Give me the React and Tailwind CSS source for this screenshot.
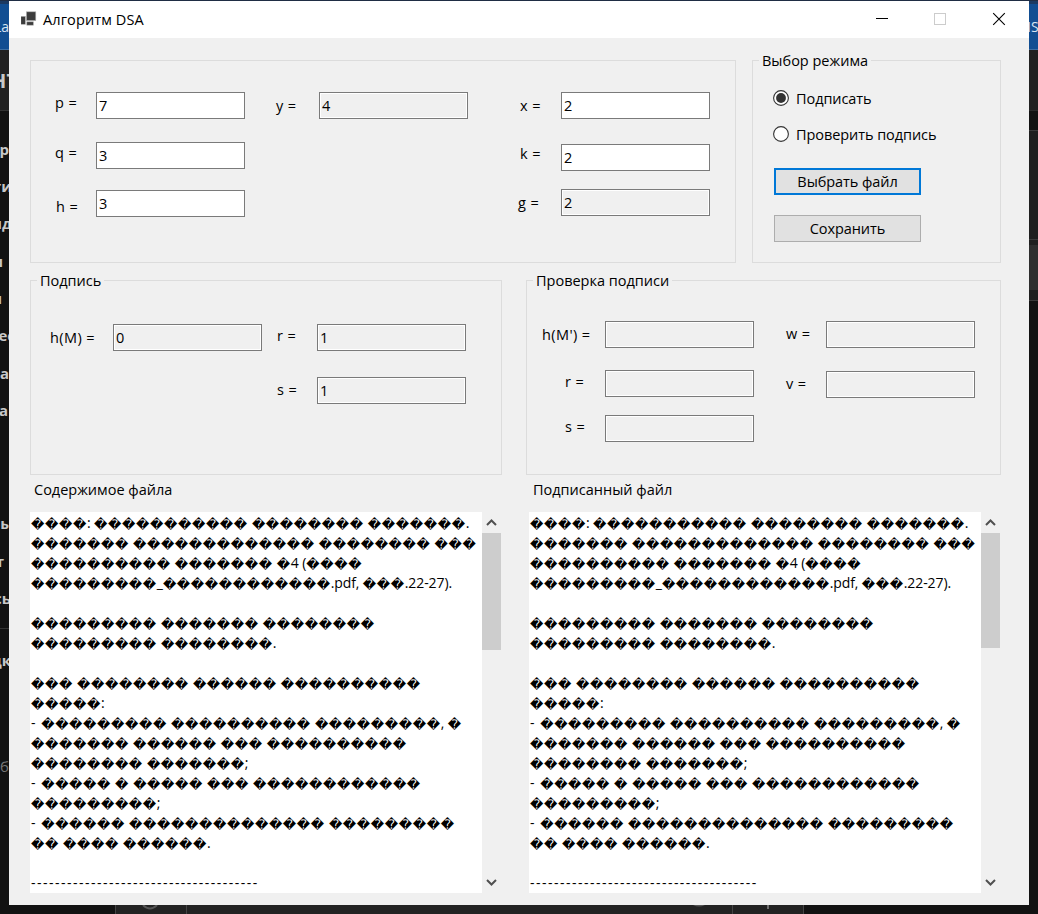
const TEXT = 'text-[14.5px] leading-5';

function Label({ children, className = '' }) {
  return <span className={`block shrink-0 whitespace-pre tracking-[0.4px] ${TEXT} ${className}`}>{children}</span>;
}

function Field({ label, value = '', readOnly, labelClass, className = '' }) {
  return (
    <div className={`flex ${className}`}>
      <Label className={labelClass}>{label}</Label>
      <div className={`h-[27px] w-[149px] shrink-0 border border-[#7a7a7a] ${readOnly ? 'bg-[#f0f0f0] shadow-[inset_0_0_0_1px_#fff]' : 'bg-white'}`}>
        <span className={`block pt-[3px] pl-[2px] ${TEXT}`}>{value}</span>
      </div>
    </div>
  );
}

function Group({ title, className = '', children }) {
  return (
    <section className={`relative shrink-0 border border-[#dcdcdc] ${className}`}>
      {title && (
        <h2 className={`absolute -top-[10px] left-[6px] whitespace-nowrap bg-[#f0f0f0] px-[3px] ${TEXT}`}>{title}</h2>
      )}
      {children}
    </section>
  );
}

function Radio({ checked, children, className = '' }) {
  return (
    <div className={`flex h-5 items-center ${className}`}>
      <svg width="16" height="16" viewBox="0 0 16 16">
        <circle cx="8" cy="8" r="7.4" fill="#fff" stroke="#333" strokeWidth="1.1" />
        {checked && <circle cx="8" cy="8" r="4.9" fill="#333" />}
      </svg>
      <span className={`pt-[2px] pl-[7px] tracking-[-0.07px] ${TEXT}`}>{children}</span>
    </div>
  );
}

function Button({ focused, children, className = '' }) {
  return (
    <button
      type="button"
      className={`flex h-[27px] w-[147px] items-center justify-center bg-[#e1e1e1] tracking-[-0.07px] ${TEXT} ${focused ? 'border-2 border-[#0078d7]' : 'border border-[#adadad]'} ${className}`}
    >
      {children}
    </button>
  );
}

const R = (n) => '\uFFFD'.repeat(n);
const LINES = [
  `${R(4)}: ${R(11)} ${R(8)} ${R(7)}.`,
  `${R(7)} ${R(13)} ${R(8)} ${R(3)}`,
  `${R(10)} ${R(7)} ${R(1)}4 (${R(4)}`,
  `${R(9)}_${R(12)}.pdf, ${R(3)}.22-27).`,
  '',
  `${R(9)} ${R(7)} ${R(8)}`,
  `${R(9)} ${R(8)}.`,
  '',
  `${R(3)} ${R(8)} ${R(6)} ${R(10)}`,
  `${R(5)}:`,
  `- ${R(9)} ${R(10)} ${R(9)}, ${R(1)}`,
  `${R(7)} ${R(6)} ${R(3)} ${R(10)}`,
  `${R(8)} ${R(7)};`,
  `- ${R(5)} ${R(1)} ${R(5)} ${R(3)} ${R(12)}`,
  `${R(9)};`,
  `- ${R(6)} ${R(14)} ${R(9)}`,
  `${R(2)} ${R(4)} ${R(6)}.`,
  '',
  '-'.repeat(38),
];

function partClass(part) {
  if (part.startsWith('\uFFFD')) return "align-[-1px] font-['DejaVu_Sans',sans-serif] text-[13px] leading-none tracking-[0.65px]";
  if (part.startsWith('--')) return 'tracking-[1.49px]';
  if (part === '- ') return 'tracking-[1px]';
  if (part === ' ') return 'tracking-[0.4px]';
  return 'tracking-[-0.1px]';
}

function Line({ text }) {
  return (
    <p className="h-5 whitespace-pre leading-5">
      {text.split(/(\uFFFD+)/).map((part, i) => (
        <span key={i} className={partClass(part)}>{part}</span>
      ))}
    </p>
  );
}

function Chevron({ down }) {
  return (
    <svg width="19" height="21" viewBox="0 0 19 21" fill="none" className={down ? 'rotate-180' : ''}>
      <path d="M5 13 L9.5 8.5 L14 13" stroke="#505050" strokeWidth="2" />
    </svg>
  );
}

function FileView({ title, thumbClass }) {
  return (
    <section className="w-[471px]">
      <h2 className={`pl-1 ${TEXT}`}>{title}</h2>
      <div className="mt-3 flex h-[381px] bg-white">
        <div className="w-[452px] overflow-hidden pt-[1px] pl-[1px] text-[14px]">
          {LINES.map((t, i) => <Line key={i} text={t} />)}
        </div>
        <div className="flex w-[19px] flex-col bg-[#f0f0f0]">
          <Chevron />
          <div className={`bg-[#cdcdcd] ${thumbClass}`} />
          <div className="flex-1" />
          <Chevron down />
        </div>
      </div>
    </section>
  );
}

function TitleBar() {
  return (
    <header className="flex h-[37px] shrink-0 bg-white pl-3">
      <svg width="16" height="37" viewBox="0 0 16 37" className="shrink-0">
        <g fill="#3c3c3c" stroke="#b4b4b4" strokeWidth="0.6">
          <rect x="5.4" y="10.8" width="9.4" height="8.8" />
          <rect x="-0.2" y="15.3" width="4.6" height="8" />
          <rect x="5.8" y="20.8" width="6.6" height="3.4" />
        </g>
      </svg>
      <h1 className={`flex-1 pt-[9px] pl-[6px] tracking-[0.12px] ${TEXT}`}>Алгоритм DSA</h1>
      <svg width="164" height="37" viewBox="865 1 164 37" fill="none">
        <path d="M876 18.5H888" stroke="#000" />
        <rect x="934.5" y="13.5" width="11" height="11" stroke="#ccc" />
        <path d="M993.2 13.2L1004.8 24.8M1004.8 13.2L993.2 24.8" stroke="#000" strokeWidth="1.1" />
      </svg>
    </header>
  );
}

function Clip({ className, children }) {
  return <span className={`absolute whitespace-nowrap leading-5 ${className}`}>{children}</span>;
}

function LeftEdge() {
  return (
    <aside className="relative flex w-[9px] shrink-0 flex-col overflow-hidden text-[15px] font-bold text-[#c8c8c8]">
      <div className="h-[3px] bg-[#1c3a63]" />
      <div className="h-[46px] border-b border-[#3d6ea3] bg-[#124e92]" />
      <div className="h-[61px] border-b border-[#333] bg-[#212121]" />
      <div className="h-[518px] border-b border-[#333]" />
      <Clip className="top-[16px] right-0 text-[14px] font-normal text-[#d8e4f2]">La</Clip>
      <Clip className="top-[70px] -right-[9px] text-[20px]">НТ</Clip>
      <Clip className="top-[138px] right-0">р</Clip>
      <Clip className="top-[175px] -right-[3px]">ги</Clip>
      <Clip className="top-[212px] -right-[3px]">нд</Clip>
      <Clip className="top-[250px] right-[6px]">и</Clip>
      <Clip className="top-[287px] right-[7px]">и</Clip>
      <Clip className="top-[324px] -right-[6px]">ес</Clip>
      <Clip className="top-[362px] right-0">ра</Clip>
      <Clip className="top-[399px] right-[1px]">а</Clip>
      <Clip className="top-[512px] -right-[4px]">ры</Clip>
      <Clip className="top-[550px] right-[5px]">т</Clip>
      <Clip className="top-[587px] -right-[2px]">сь</Clip>
      <Clip className="top-[649px] -right-[2px]">дк</Clip>
      <Clip className="top-[755px] right-0 font-normal text-[#777]">б</Clip>
    </aside>
  );
}

function RightEdge() {
  return (
    <aside className="relative flex w-[9px] shrink-0 flex-col overflow-hidden">
      <div className="h-[3px] bg-[#1c3a63]" />
      <div className="h-[46px] border-b border-[#3d6ea3] bg-[#124e92]" />
      <div className="h-[61px] border-b border-[#2a2a2a] bg-[#212121]" />
      <div className="h-5 border-b border-[#3a3a3a]" />
      <div className="h-[109px] border-b border-[#3a3a3a] bg-[#1f1f1f]" />
      <div className="h-[5px] bg-[#1f1f1f]" />
      <div className="h-[45px] bg-[#2e2e2e]" />
      <div className="h-[11px] border-b border-[#3a3a3a] bg-[#1f1f1f]" />
      <Clip className="top-[16px] -left-[2px] text-[14px] text-[#d8e4f2]">IS</Clip>
    </aside>
  );
}

export default function App() {
  return (
    <div className="flex h-[914px] w-[1038px] flex-col overflow-hidden bg-[#121212] font-['Open_Sans','Noto_Sans',sans-serif] text-black">
      <div className="h-px shrink-0 bg-[#1f2d44]" />
      <div className="flex h-[904px] shrink-0">
        <LeftEdge />
        <main className="flex w-[1020px] shrink-0 flex-col bg-[#f0f0f0]">
          <TitleBar />
          <div className="flex gap-4 pt-[22px] pl-[21px]">
            <Group className="flex h-[203px] w-[706px] pt-[31px] pl-6">
              <div>
                <Field label="p =" value="7" labelClass="w-[41px] pt-[1px]" />
                <Field label="q =" value="3" labelClass="w-[41px] pt-[1px]" className="mt-[23px]" />
                <Field label="h =" value="3" labelClass="w-[41px] pt-[7px] pl-px" className="mt-[21px]" />
              </div>
              <div className="pl-[31px]">
                <Field label="y =" value="4" readOnly labelClass="w-[43px] pt-1" />
              </div>
              <div className="pl-[50px]">
                <Field label="x =" value="2" labelClass="w-[43px] pt-1 pl-[2px]" />
                <Field label="k =" value="2" labelClass="w-[43px] pl-[2px]" className="mt-[25px]" />
                <Field label="g =" value="2" readOnly labelClass="w-[43px] pt-1" className="mt-[18px]" />
              </div>
            </Group>
            <Group title="Выбор режима" className="h-[203px] w-[249px] pt-[27px] pl-5">
              <Radio checked>Подписать</Radio>
              <Radio className="mt-4">Проверить подпись</Radio>
              <Button focused className="mt-6 ml-px">Выбрать файл</Button>
              <Button className="mt-5 ml-px">Сохранить</Button>
            </Group>
          </div>
          <div className="flex gap-6 pt-[17px] pl-[21px]">
            <Group title="Подпись" className="flex h-[195px] w-[472px] pt-[43px] pl-[19px]">
              <Field label="h(M) =" value="0" readOnly labelClass="w-[63px] pt-1" />
              <div className="pl-[15px]">
                <Field label="r =" value="1" readOnly labelClass="w-10 pt-[2px]" />
                <Field label="s =" value="1" readOnly labelClass="w-10 pt-[3px]" className="mt-[26px]" />
              </div>
            </Group>
            <Group title="Проверка подписи" className="flex h-[195px] w-[475px] pt-10 pl-[15px]">
              <div>
                <Field label="h(M') =" readOnly labelClass="w-[63px] pt-1" />
                <Field label="r =" readOnly labelClass="w-[63px] pt-[2px] pl-[23px]" className="mt-[22px]" />
                <Field label="s =" readOnly labelClass="w-[63px] pt-[2px] pl-[23px]" className="mt-[18px]" />
              </div>
              <div className="pl-8">
                <Field label="w =" readOnly labelClass="w-10 pt-[3px]" />
                <Field label="v =" readOnly labelClass="w-10 pt-[3px]" className="mt-[23px]" />
              </div>
            </Group>
          </div>
          <div className="flex gap-7 pt-[5px] pl-[21px]">
            <FileView title="Содержимое файла" thumbClass="h-[117px]" />
            <FileView title="Подписанный файл" thumbClass="h-[115px]" />
          </div>
        </main>
        <RightEdge />
      </div>
      <footer className="h-[9px] shrink-0 pl-[115px]">
        <svg width="689" height="9" viewBox="115 0 689 9" fill="none" className="bg-[#222]">
          <path d="M115.5 0V9M803.5 0V9M186.5 0V9M732.5 0V9" stroke="#444" />
          <path d="M143 0Q150 7 157 0" stroke="#555" strokeWidth="2" />
          <path d="M693 0Q699 3 705 0" fill="#555" />
          <path d="M768 0V4" stroke="#888" strokeWidth="1.5" />
        </svg>
      </footer>
    </div>
  );
}
